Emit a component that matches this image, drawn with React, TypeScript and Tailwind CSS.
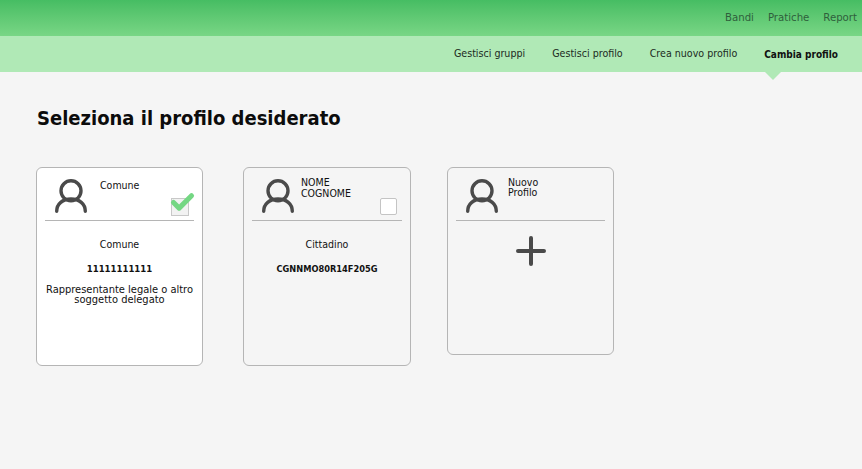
import { Check } from 'lucide-react';

const font = { fontFamily: '"DejaVu Sans Condensed", "DejaVu Sans", sans-serif' };

function UserIcon() {
  return (
    <svg width="32" height="34" viewBox="0 0 32 34" fill="none" stroke="#4a4a4a" strokeWidth="3.4" strokeLinecap="round">
      <circle cx="16" cy="11.800" r="10" />
      <path d="M1.700 32.300c0-7.500 6-12.300 14.300-12.300s14.300 4.800 14.300 12.300" />
    </svg>
  );
}

function Card({
  className,
  titleClass,
  title,
  children,
  box,
}: {
  className: string;
  titleClass: string;
  title: React.ReactNode;
  children?: React.ReactNode;
  box?: React.ReactNode;
}) {
  return (
    <div className={`rounded-[6px] border border-[#b5b5b5] px-2 shrink-0 ${className}`}>
      <div className="relative h-[53px] border-b border-[#b5b5b5]">
        <div className="absolute left-[10px] top-[11px]">
          <UserIcon />
        </div>
        <div className={`absolute text-[10.500px] text-[#111] ${titleClass}`}>{title}</div>
        {box}
      </div>
      {children}
    </div>
  );
}

export default function App() {
  return (
    <div className="h-[469px] w-[862px] overflow-hidden bg-[#f5f5f5]" style={font}>
      <div className="flex h-[36px] items-center justify-end gap-[14px] bg-gradient-to-b from-[#46bd63] to-[#78d685] pr-[5px] text-[11.300px] text-[#2f5f3c]">
        <span>Bandi</span>
        <span>Pratiche</span>
        <span>Report</span>
      </div>
      <div className="flex h-[36px] items-center justify-end gap-[27px] bg-[#b0e9b6] pr-[24px] text-[10.600px] text-[#1c2a1e]">
        <span>Gestisci gruppi</span>
        <span>Gestisci profilo</span>
        <span>Crea nuovo profilo</span>
        <span className="relative text-[10px] font-bold text-[#111]">
          Cambia profilo
          <span className="absolute left-[1px] top-[25px] h-0 w-0 border-x-[8px] border-t-[8px] border-x-transparent border-t-[#b0e9b6]" />
        </span>
      </div>
      <div className="pl-[36px]">
        <h1 className="mt-[32px] pl-[1px] text-[20px] leading-[28px] font-bold text-[#0c0c0c]">Seleziona il profilo desiderato</h1>
        <div className="mt-[35px] flex items-start">
          <Card
            className="h-[199px] w-[167px] bg-white"
            titleClass="left-[55px] top-[11px] leading-[12px]"
            title="Comune"
            box={
              <div className="absolute left-[126px] top-[30px] h-[18px] w-[18px] border border-[#c8c8c8] bg-[#f2f2f2]">
                <Check className="absolute -left-[3px] -top-[10px] h-[27px] w-[27px] text-[#74d783]" strokeWidth={4.5} />
              </div>
            }
          >
            <div className="mt-[17px] text-center text-[10.500px] leading-[12px] text-[#111]">Comune</div>
            <div className="mt-[13px] text-center text-[9.500px] leading-[12px] font-bold text-[#111]">11111111111</div>
            <div className="mt-[10px] text-center text-[11px] leading-[10px] whitespace-nowrap text-[#111]">
              Rappresentante legale o altro
              <br />
              soggetto delegato
            </div>
          </Card>
          <Card
            className="ml-[40px] h-[199px] w-[168px] bg-[#f5f5f5]"
            titleClass="left-[49px] top-[9px] leading-[11px]"
            title={
              <>
                NOME
                <br />
                COGNOME
              </>
            }
            box={<div className="absolute left-[128px] top-[30px] h-[17px] w-[17px] rounded-[2px] border border-[#c4c4c4] bg-white" />}
          >
            <div className="mt-[17px] text-center text-[10.500px] leading-[12px] text-[#111]">Cittadino</div>
            <div className="mt-[13px] text-center text-[9.200px] leading-[12px] font-bold text-[#111]">CGNNMO80R14F205G</div>
          </Card>
          <Card
            className="ml-[36px] h-[188px] w-[167px] bg-[#f5f5f5]"
            titleClass="left-[52px] top-[9px] leading-[10px]"
            title={
              <>
                Nuovo
                <br />
                Profilo
              </>
            }
          >
            <div className="mt-[15px] flex justify-center">
              <svg width="30" height="30" viewBox="0 0 30 30" stroke="#4a4a4a" strokeWidth="4" strokeLinecap="round">
                <path d="M15 2v26M2 15h26" />
              </svg>
            </div>
          </Card>
        </div>
      </div>
    </div>
  );
}
